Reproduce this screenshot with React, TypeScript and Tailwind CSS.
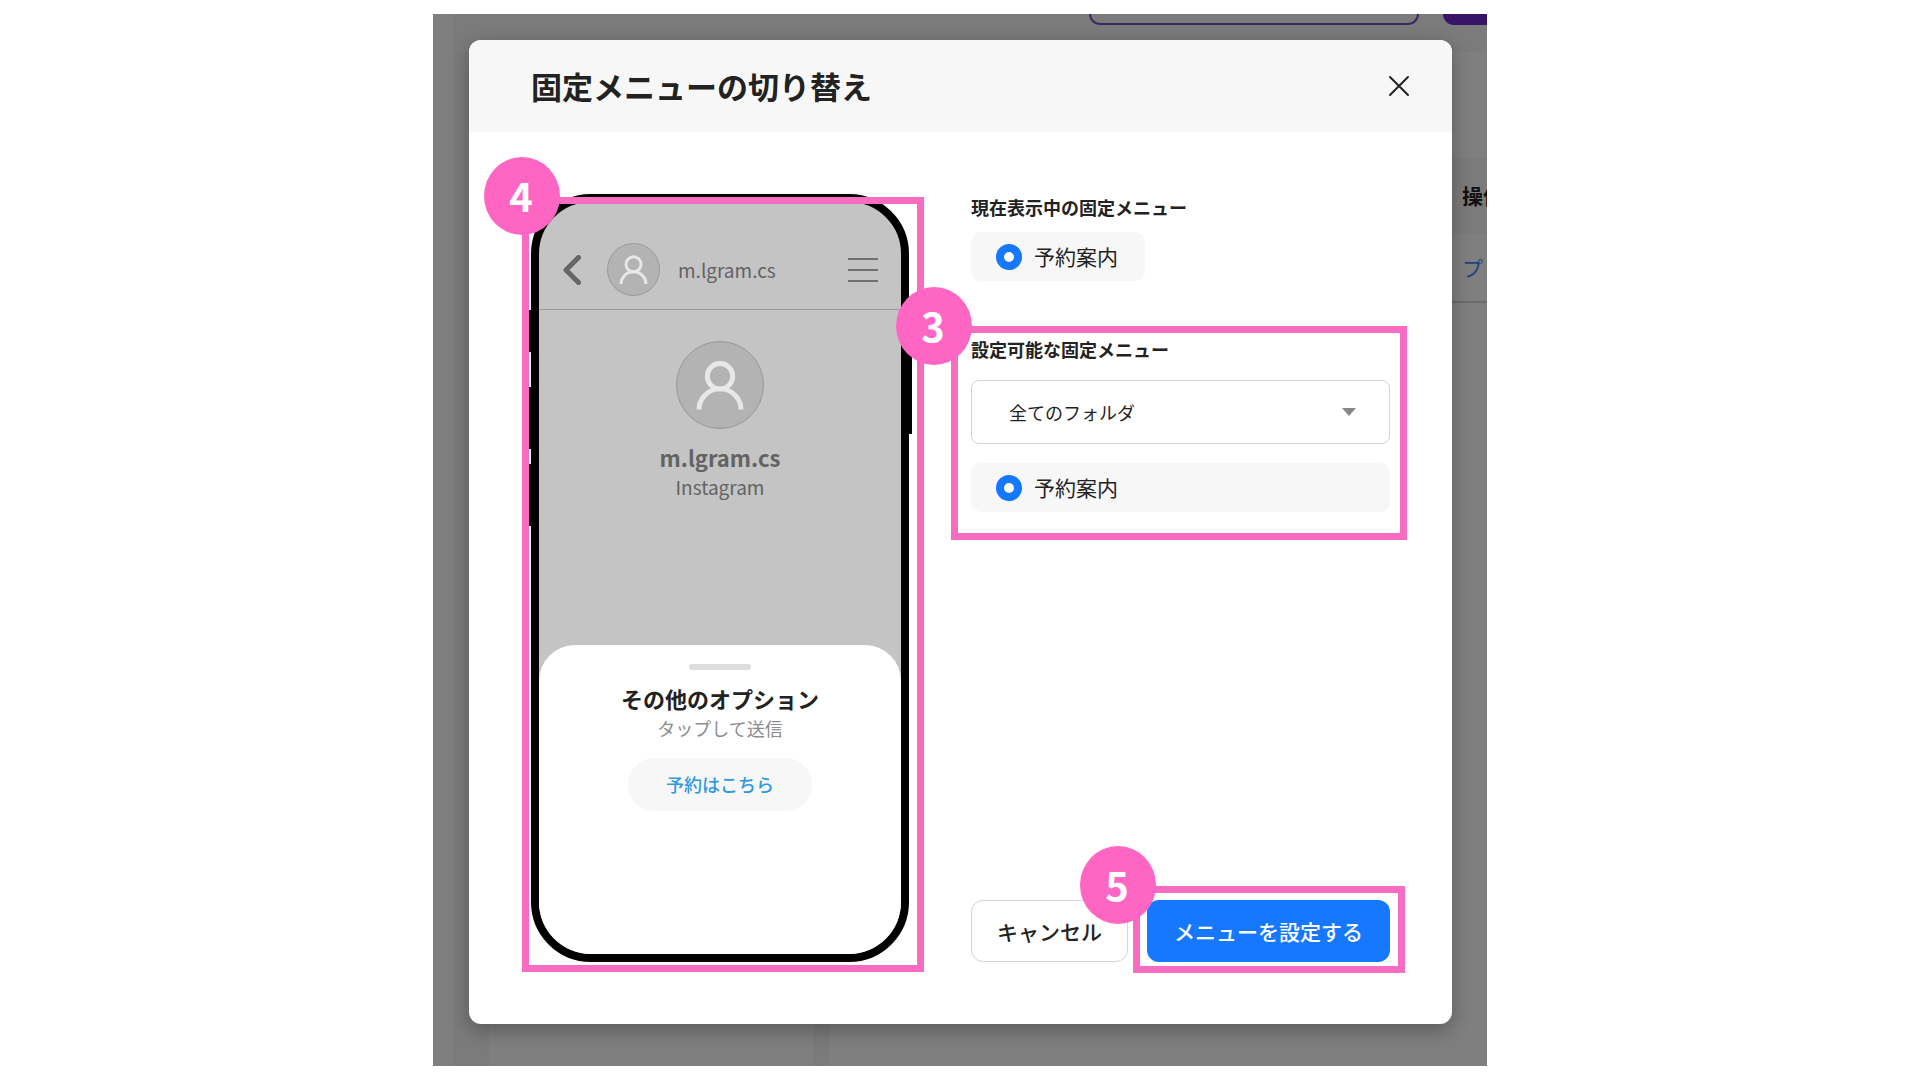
import type { ReactNode } from "react";

function PersonIcon({ className }: { className: string }) {
  return (
    <svg viewBox="0 0 88 88" className={className} fill="none" stroke="#e8e8e8" strokeWidth="5" aria-hidden="true">
      <circle cx="44" cy="35" r="13" />
      <path d="M22.5 69a21.5 21 0 0 1 43 0" />
    </svg>
  );
}

function Callout({ label, box, badge }: { label: string; box: string; badge: string }) {
  return (
    <div className={`pointer-events-none absolute z-10 border-[7px] border-[#f76bc0] ${box}`}>
      <span
        className={`absolute flex h-[78px] w-[76px] items-center justify-center rounded-[50%] bg-[#ff66c4] pr-0.5 pb-0.5 text-[40px] leading-none font-bold text-white ${badge}`}
      >
        {label}
      </span>
    </div>
  );
}

function MenuChoice({ name, children, className = "" }: { name: string; children: ReactNode; className?: string }) {
  return (
    <label className={`flex items-center gap-3 rounded-[10px] bg-[#f7f7f7] pr-[27px] pl-[25px] py-[9px] text-[21px] leading-[31px] ${className}`}>
      <input
        type="radio"
        name={name}
        defaultChecked
        className="size-[26px] shrink-0 appearance-none rounded-full border-8 border-[#1677ff] bg-white"
      />
      {children}
    </label>
  );
}

function PageBehind() {
  return (
    <div className="absolute inset-0 flex overflow-hidden bg-[#f6f6f6]" aria-hidden="true">
      <div className="w-5 bg-white" />
      <div className="flex flex-1 flex-col pl-9">
        <div className="flex h-[38px] items-start justify-end gap-6">
          <div className="h-[11px] w-[330px] rounded-b-[12px] border-x-2 border-b-2 border-[#7a4fc0]" />
          <div className="h-[11px] w-11 rounded-bl-[12px] bg-[#7326cc]" />
        </div>
        <div className="flex flex-1 gap-4">
          <div className="w-[324px] bg-white" />
          <div className="flex flex-1 flex-col bg-white pt-[106px]">
            <div className="flex h-[76px] items-center justify-end bg-[#f7f7f7] text-[21px] font-bold">
              <span className="w-[25px] overflow-hidden whitespace-nowrap">操作</span>
            </div>
            <div className="flex h-[69px] items-center justify-end border-b-2 border-[#d9d9d9] text-[21px] text-[#3d8bff]">
              <span className="w-[25px] overflow-hidden whitespace-nowrap">プ</span>
            </div>
          </div>
        </div>
      </div>
      <div className="absolute inset-0 bg-black/50" />
    </div>
  );
}

function PhonePreview() {
  return (
    <div className="relative aspect-[378/768] w-[378px] shrink-0">
      <div className="absolute top-[116px] -left-0.5 h-[42px] w-1 bg-black" />
      <div className="absolute top-[193px] -left-0.5 h-[62px] w-1 bg-black" />
      <div className="absolute top-[270px] -left-0.5 h-[62px] w-1 bg-black" />
      <div className="absolute top-[140px] -right-[3px] h-[100px] w-1 bg-black" />
      <div className="flex h-full flex-col overflow-hidden rounded-[60px] border-8 border-black bg-[#c4c4c4] text-[#636363]">
        <div className="flex items-center border-b border-[#999] pt-[41px] pr-[23px] pb-[13px] pl-6">
          <svg viewBox="0 0 18 30" className="h-[30px] w-[18px]" fill="none" stroke="#666" strokeWidth="5" strokeLinecap="round" strokeLinejoin="round" aria-hidden="true">
            <path d="M15.5 2.5 3 15l12.5 12.5" />
          </svg>
          <div className="ml-[26px] size-[53px] rounded-full border border-[#999] bg-[#b3b3b3]">
            <PersonIcon className="size-full" />
          </div>
          <span className="ml-[18px] text-[19px] leading-[30px]">m.lgram.cs</span>
          <svg viewBox="0 0 30 24" className="ml-auto h-6 w-[30px]" stroke="#707070" strokeWidth="2" aria-hidden="true">
            <path d="M0 1h30M0 12h30M0 23h30" />
          </svg>
        </div>
        <div className="flex flex-1 flex-col items-center pt-[31px]">
          <div className="size-[88px] rounded-full border border-[#999] bg-[#b3b3b3]">
            <PersonIcon className="size-full" />
          </div>
          <p className="mt-3 text-[22px] leading-8 font-bold">m.lgram.cs</p>
          <p className="text-[19px] leading-7">Instagram</p>
        </div>
        <div className="flex h-[309px] flex-col items-center rounded-t-[36px] bg-white pt-[19px]">
          <div className="h-1.5 w-[62px] rounded-full bg-[#ddd]" />
          <p className="mt-3 text-[22px] leading-8 font-bold text-[#222]">その他のオプション</p>
          <p className="text-[18px] leading-7 text-[#8c8c8c]">タップして送信</p>
          <button type="button" className="mt-4 rounded-full bg-[#f7f7f7] px-[38px] py-3 text-[18px] leading-[29px] font-medium text-[#2f98df]">
            予約はこちら
          </button>
        </div>
      </div>
      <Callout label="4" box="top-[3px] -right-[15px] -bottom-[10px] -left-[9px]" badge="-top-[47px] -left-[45px]" />
    </div>
  );
}

export default function App() {
  return (
    <div className="min-h-screen bg-white py-[14px] font-['Noto_Sans_CJK_JP',sans-serif] text-[#222]">
      <div className="relative mx-auto w-full max-w-[1054px] pt-[26px] pr-[35px] pb-[42px] pl-9">
        <PageBehind />
        <section role="dialog" aria-labelledby="dialog-title" className="relative rounded-[12px] bg-white shadow-[0_6px_20px_rgba(0,0,0,0.3)]">
          <header className="flex items-center justify-between rounded-t-[12px] bg-[#f7f7f7] py-[23px] pr-[42px] pl-[62px]">
            <h1 id="dialog-title" className="text-[31px] leading-[46px] font-bold">固定メニューの切り替え</h1>
            <button type="button" aria-label="閉じる">
              <svg viewBox="0 0 22 22" className="size-[22px]" stroke="#222" strokeWidth="2" strokeLinecap="round" aria-hidden="true">
                <path d="M2 2l18 18M20 2 2 20" />
              </svg>
            </button>
          </header>
          <div className="flex gap-[62px] p-[62px]">
            <PhonePreview />
            <div className="flex flex-1 flex-col">
              <div className="flex flex-col items-start">
                <h2 className="text-[18px] leading-[26px] font-bold">現在表示中の固定メニュー</h2>
                <MenuChoice name="current" className="mt-3">予約案内</MenuChoice>
              </div>
              <div className="relative mt-[55px]">
                <h2 className="text-[18px] leading-[26px] font-bold">
                  <label htmlFor="folder">設定可能な固定メニュー</label>
                </h2>
                <div className="relative mt-[18px]">
                  <select id="folder" className="h-16 w-full appearance-none rounded-[8px] border border-[#d4d4d4] bg-white px-[37px] text-[18px]">
                    <option>全てのフォルダ</option>
                  </select>
                  <svg viewBox="0 0 14 8" className="pointer-events-none absolute top-7 right-[34px] h-2 w-[14px]" fill="#888" aria-hidden="true">
                    <path d="M0 0h14L7 8z" />
                  </svg>
                </div>
                <MenuChoice name="next" className="mt-[19px]">予約案内</MenuChoice>
                <Callout label="3" box="-top-[10px] -right-[17px] -bottom-[28px] -left-[20px]" badge="-top-[46px] -left-[62px]" />
              </div>
              <div className="mt-auto flex gap-[19px]">
                <button type="button" className="rounded-[12px] border border-[#d4d4d4] bg-white px-[25px] py-[15px] text-[21px] leading-[30px] font-medium whitespace-nowrap">
                  キャンセル
                </button>
                <div className="relative flex-1">
                  <button type="button" className="w-full rounded-[12px] bg-[#1677ff] py-4 text-[21px] leading-[30px] font-medium whitespace-nowrap text-white">
                    メニューを設定する
                  </button>
                  <Callout label="5" box="-top-[14px] -right-[15px] -bottom-[11px] -left-[14px]" badge="-top-[47px] -left-[60px]" />
                </div>
              </div>
            </div>
          </div>
        </section>
      </div>
    </div>
  );
}
